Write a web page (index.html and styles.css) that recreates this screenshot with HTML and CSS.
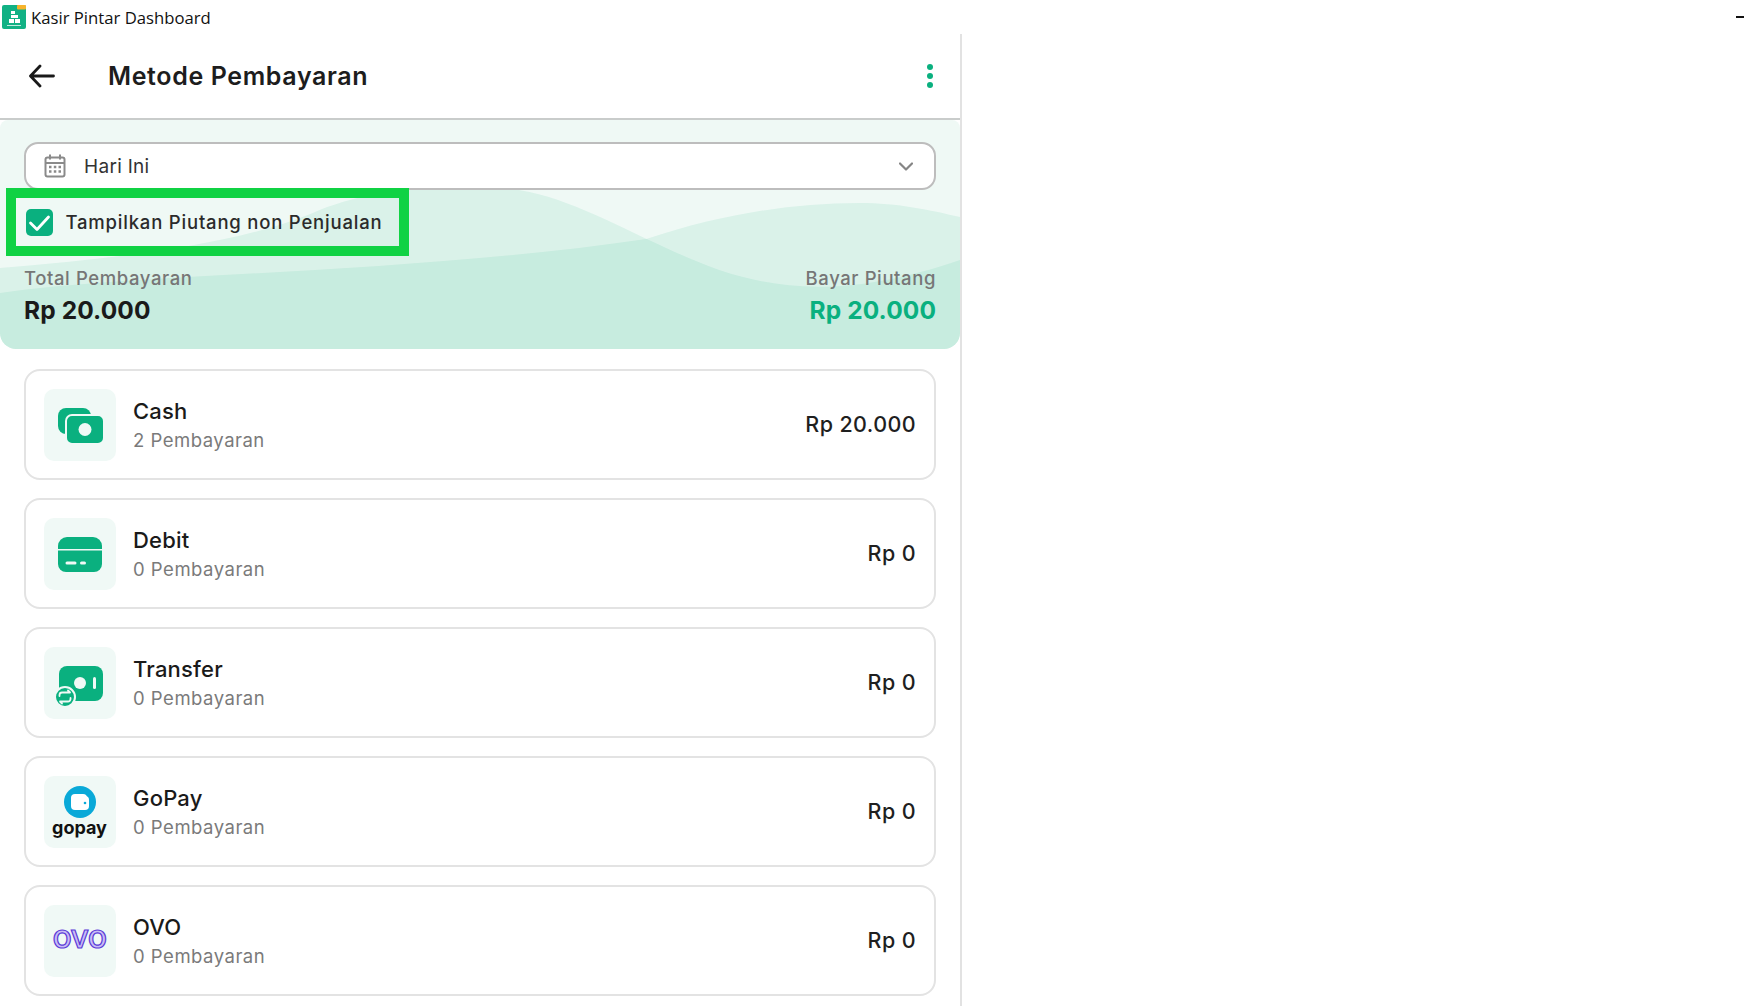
FILE: index.html
```html
<!DOCTYPE html>
<html lang="id">
<head>
<meta charset="utf-8">
<title>Kasir Pintar Dashboard</title>
<link rel="stylesheet" href="styles.css">
</head>
<body>
<div class="app">
  <div class="titlebar">
    <div class="titlebar-left">
      <svg class="app-icon" width="24" height="24" viewBox="0 0 24 24">
        <rect width="24" height="24" rx="2" fill="#11b184"/>
        <rect x="15" y="0" width="9" height="4.5" rx="1" fill="#f7b32b"/>
        <path d="M9 6h4v3h-4zM9 10h7v3H9zM7 14h5v4H7zM13 14h5v4h-5z" fill="#fff"/>
        <rect x="5" y="20" width="14" height="1" fill="#bfeade"/>
      </svg>
      <span class="app-name">Kasir Pintar Dashboard</span>
    </div>
    <span class="minimize"></span>
  </div>

  <main class="panel">
    <header class="header">
      <svg class="back" width="26" height="24" viewBox="0 0 26 24" fill="none" stroke="#1a1a1a" stroke-width="2.8" stroke-linecap="round" stroke-linejoin="round">
        <path d="M24.500 12H2M11 2 1.500 12 11 22"/>
      </svg>
      <h1 class="page-title">Metode Pembayaran</h1>
      <svg class="kebab" width="6" height="24" viewBox="0 0 6 24" fill="#0ab07f">
        <circle cx="3" cy="3" r="3"/><circle cx="3" cy="12" r="3"/><circle cx="3" cy="21" r="3"/>
      </svg>
    </header>

    <section class="hero">
      <svg class="waves" viewBox="0 120 961 229" preserveAspectRatio="none">
        <path class="wave" d="M0 268C120 258 240 245 320 210C380 186 470 180 530 192C590 205 650 245 720 270C780 290 850 298 961 260V349H0Z"/>
        <path class="wave" d="M0 293C150 272 400 275 647 239C720 215 790 203 860 203C900 203 930 210 961 217V349H0Z"/>
      </svg>
      <div class="hero-content">
        <div class="select">
          <svg class="calendar" width="22" height="24" viewBox="0 0 22 24" fill="none" stroke="#8a8a8a" stroke-width="2">
            <rect x="1.500" y="3.500" width="19" height="19" rx="2"/>
            <path d="M1.500 9h19M6 .5v5M16 .5v5"/>
            <path d="M5 13h2.500M9.800 13h2.500M14.500 13h2.500M5 17.500h2.500M9.800 17.500h2.500M14.500 17.500h2.500" stroke-width="2.4"/>
          </svg>
          <span class="select-label">Hari Ini</span>
          <svg class="chevron" width="14" height="9" viewBox="0 0 14 9" fill="none" stroke="#858585" stroke-width="2.2" stroke-linecap="round" stroke-linejoin="round">
            <path d="M1 1.500 7 7.500 13 1.500"/>
          </svg>
        </div>
        <div class="highlight">
          <span class="checkbox">
            <svg width="27" height="27" viewBox="0 0 27 27" fill="none" stroke="#fff" stroke-width="2.8" stroke-linecap="round" stroke-linejoin="round">
              <path d="M4.500 14 11 20.500 22.500 8"/>
            </svg>
          </span>
          <span class="check-label">Tampilkan Piutang non Penjualan</span>
        </div>
        <div class="totals">
          <div>
            <div class="total-label">Total Pembayaran</div>
            <div class="total-value">Rp 20.000</div>
          </div>
          <div class="align-right">
            <div class="total-label">Bayar Piutang</div>
            <div class="total-value green">Rp 20.000</div>
          </div>
        </div>
      </div>
    </section>

    <div class="list">
      <article class="card">
        <div class="icon-box">
          <svg width="72" height="72" viewBox="0 0 72 72">
            <path d="M14 27a8 8 0 0 1 8-8h17a8 8 0 0 1 8 8v18H22a8 8 0 0 1-8-8z" fill="#0ab07f"/>
            <rect x="22" y="26" width="38" height="29" rx="6" fill="#0ab07f" stroke="#f0f9f6" stroke-width="2"/>
            <circle cx="41" cy="40.500" r="6.500" fill="#f0f9f6"/>
          </svg>
        </div>
        <div class="card-text"><div class="card-title">Cash</div><div class="card-sub">2 Pembayaran</div></div>
        <div class="card-amount">Rp 20.000</div>
      </article>
      <article class="card">
        <div class="icon-box">
          <svg width="72" height="72" viewBox="0 0 72 72">
            <path d="M14 28a9 9 0 0 1 9-9h26a9 9 0 0 1 9 9v3H14z" fill="#0ab07f"/>
            <path d="M14 32.500h44V46a8 8 0 0 1-8 8H22a8 8 0 0 1-8-8z" fill="#0ab07f"/>
            <rect x="21.500" y="43.500" width="11" height="3" rx="1.500" fill="#f0f9f6"/>
            <rect x="36" y="43.500" width="6" height="3" rx="1.500" fill="#f0f9f6"/>
          </svg>
        </div>
        <div class="card-text"><div class="card-title">Debit</div><div class="card-sub">0 Pembayaran</div></div>
        <div class="card-amount">Rp 0</div>
      </article>
      <article class="card">
        <div class="icon-box">
          <svg width="72" height="72" viewBox="0 0 72 72">
            <rect x="15" y="19" width="44" height="35" rx="8" fill="#0ab07f"/>
            <circle cx="36" cy="36" r="6" fill="#f0f9f6"/>
            <rect x="49" y="30" width="3" height="12" rx="1.500" fill="#f0f9f6"/>
            <circle cx="21" cy="50" r="10" fill="#0ab07f" stroke="#f0f9f6" stroke-width="2"/>
            <path d="M15.500 49v-1a2.500 2.500 0 0 1 2.500-2.500h8l-2-2M26.500 51v1a2.500 2.500 0 0 1-2.500 2.500h-8l2 2" fill="none" stroke="#f0f9f6" stroke-width="1.800" stroke-linecap="round" stroke-linejoin="round"/>
          </svg>
        </div>
        <div class="card-text"><div class="card-title">Transfer</div><div class="card-sub">0 Pembayaran</div></div>
        <div class="card-amount">Rp 0</div>
      </article>
      <article class="card">
        <div class="icon-box icon-column">
          <svg width="32" height="32" viewBox="0 0 32 32">
            <circle cx="16" cy="16" r="16" fill="#0aa9d8"/>
            <rect x="7" y="8" width="16" height="8" rx="4" fill="#fff"/>
            <rect x="7" y="10" width="18" height="14" rx="4" fill="#fff"/>
            <circle cx="21" cy="17" r="1.300" fill="#0aa9d8"/>
          </svg>
          <span class="gopay-word">gopay</span>
        </div>
        <div class="card-text"><div class="card-title">GoPay</div><div class="card-sub">0 Pembayaran</div></div>
        <div class="card-amount">Rp 0</div>
      </article>
      <article class="card">
        <div class="icon-box"><span class="ovo-word">ovo</span></div>
        <div class="card-text"><div class="card-title">OVO</div><div class="card-sub">0 Pembayaran</div></div>
        <div class="card-amount">Rp 0</div>
      </article>
    </div>
  </main>
</div>
</body>
</html>
```

FILE: styles.css
```css
* { box-sizing: border-box; }
html, body { margin: 0; padding: 0; background: #fff; height: 1006px; overflow: hidden; }
body { width: 1744px; font-family: Inter, "Open Sans", sans-serif; color: #1a1a1a; }
.app { display: flex; flex-direction: column; height: 100%; }

.titlebar { height: 34px; flex: none; display: flex; align-items: center; justify-content: space-between; }
.titlebar-left { display: flex; align-items: center; padding-left: 2px; gap: 5px; }
.app-icon { display: block; }
.app-name { font-family: "Open Sans", sans-serif; font-size: 16.7px; color: #111; }
.minimize { width: 8px; height: 2px; background: #111; }

.panel { width: 962px; flex: 1; border-right: 2px solid #e2e2e2; }

.header { height: 86px; display: flex; align-items: center; border-bottom: 2px solid #c9cccb; padding: 0 27px 0 29px; }
.back { flex: none; }
.page-title { margin: 0 0 0 53px; flex: 1; font-size: 25px; font-weight: 600; letter-spacing: .63px; color: #1d1d1d; }
.kebab { flex: none; }

.hero { position: relative; height: 229px; background: #eff9f5; border-radius: 8px 8px 16px 16px; overflow: hidden; }
.waves { position: absolute; inset: 0; width: 100%; height: 100%; }
.wave { fill: #0ab07f; fill-opacity: .09; }
.hero-content { position: relative; padding: 22px 24px 0; }

.select { height: 48px; display: flex; align-items: center; background: #fff; border: 2px solid #bdbdbd; border-radius: 14px; padding: 0 21px 0 18px; }
.select-label { flex: 1; margin-left: 18px; font-size: 19px; letter-spacing: .3px; color: #333; }

.highlight { width: 403px; height: 68px; margin: -2px 0 0 -18px; border: 10px solid #10d244; display: flex; align-items: center; padding-left: 9.5px; gap: 13px; position: relative; }
.checkbox { width: 27px; height: 27px; border-radius: 5px; background: #0ab07f; flex: none; display: flex; }
.check-label { font-size: 18.5px; font-weight: 500; letter-spacing: .8px; white-space: nowrap; color: #2b2b2b; }

.totals { display: flex; justify-content: space-between; margin-top: 10px; }
.align-right { text-align: right; }
.total-label { font-size: 18.5px; font-weight: 500; color: #767676; line-height: 24px; letter-spacing: .6px; }
.total-value { font-size: 24.5px; font-weight: 700; line-height: 32px; margin-top: 4px; letter-spacing: .1px; color: #1a1a1a; }
.total-value.green { color: #0ab07f; }

.list { display: flex; flex-direction: column; gap: 18px; padding: 20px 24px 0; }
.card { height: 111px; flex: none; display: flex; align-items: center; border: 2px solid #e3e3e3; border-radius: 16px; padding: 0 18px 0 17.5px; }
.icon-box { width: 72px; height: 72px; flex: none; border-radius: 10px; background: #f0f9f6; display: flex; align-items: center; justify-content: center; }
.icon-box svg { display: block; }
.icon-column { flex-direction: column; gap: 0; }
.gopay-word { font-size: 18px; line-height: 20px; font-weight: 700; color: #111; }
.ovo-word { font-size: 32px; line-height: 30px; font-weight: 500; color: #c9bdf5; -webkit-text-stroke: 1.2px #5b3bd8; letter-spacing: -.6px; margin-top: -8px; }
.card-text { flex: 1; margin-left: 17.5px; }
.card-title { font-size: 22px; line-height: 28px; font-weight: 500; letter-spacing: .2px; color: #1a1a1a; }
.card-sub { font-size: 18.5px; line-height: 24px; color: #7a7a7a; margin-top: 3px; letter-spacing: .5px; }
.card-amount { font-size: 21.5px; font-weight: 500; letter-spacing: .4px; color: #1f1f1f; margin-bottom: 2px; }
```
